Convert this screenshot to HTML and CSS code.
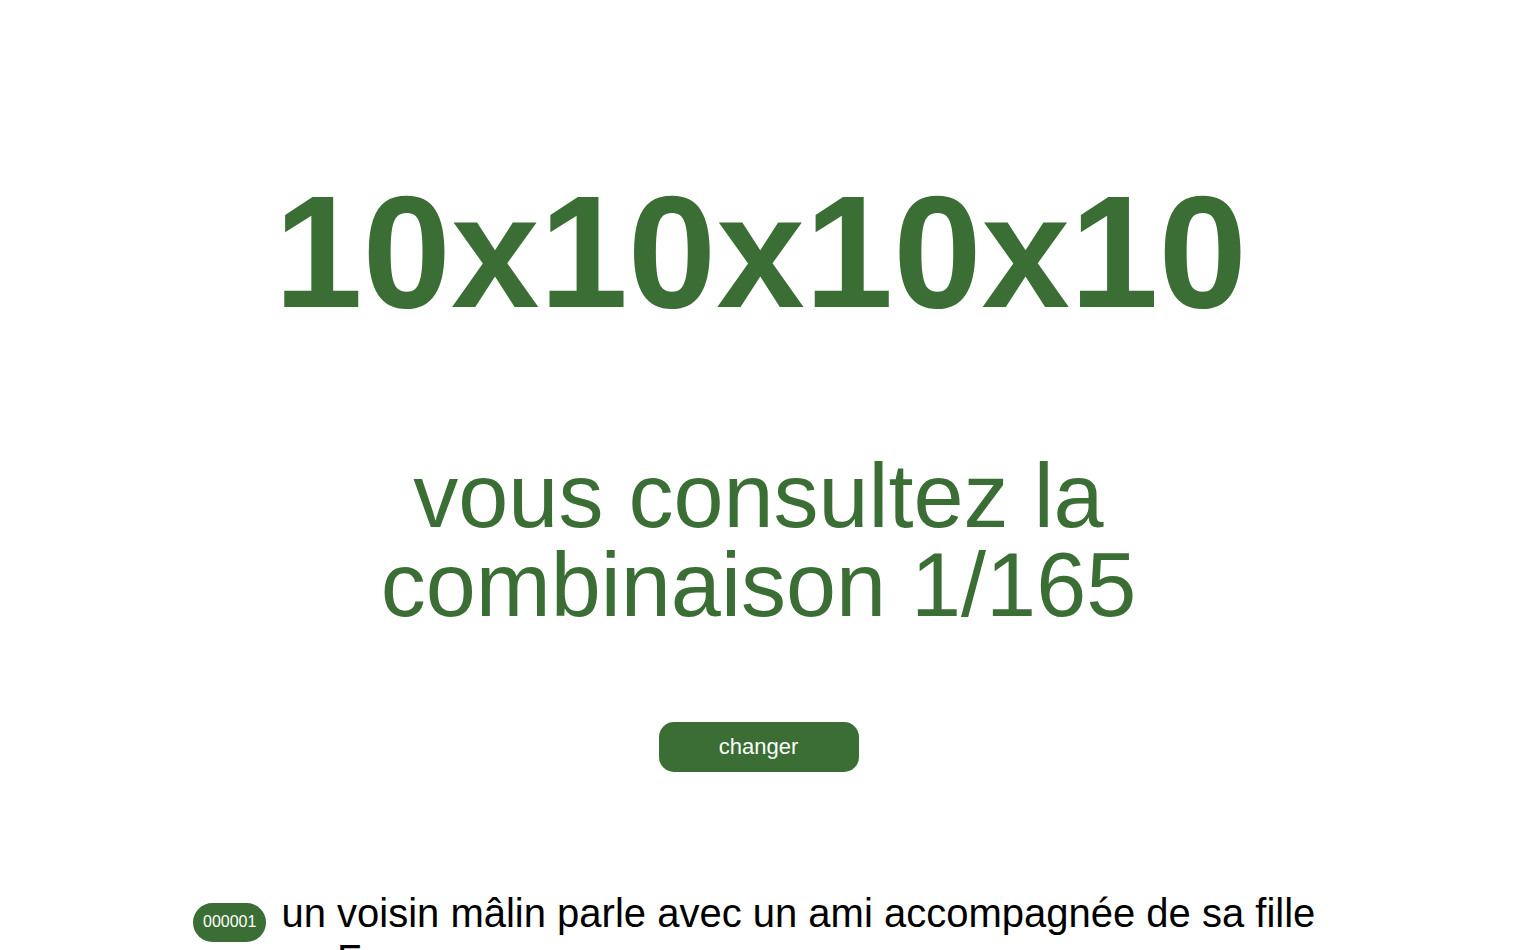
FILE: index.html
```html
<!DOCTYPE html>
<html lang="fr">
<head>
<meta charset="utf-8">
<title>10x10x10x10</title>
<link rel="stylesheet" href="styles.css">
</head>
<body>
<main class="page">
  <h1 class="title">10x10x10x10</h1>
  <p class="subtitle">vous consultez la combinaison 1/165</p>
  <button class="change-btn" type="button">changer</button>
  <ul class="list">
    <li class="item">
      <span class="badge">000001</span>
      <span class="item-text">un voisin mâlin parle avec un ami accompagnée de sa fille en France</span>
    </li>
  </ul>
</main>
</body>
</html>
```

FILE: styles.css
```css
html, body {
  margin: 0;
  padding: 0;
  background: #ffffff;
}

body {
  font-family: "Liberation Sans", Arial, sans-serif;
  color: #000000;
}

.page {
  display: flex;
  flex-direction: column;
  align-items: center;
  padding-top: 171px;
}

.title {
  margin: 0;
  padding-left: 4px;
  font-size: 159px;
  line-height: 162px;
  font-weight: 700;
  color: #3a6e34;
  text-align: center;
}

.subtitle {
  margin: 119px 0 0;
  max-width: 820px;
  font-size: 90px;
  line-height: 89px;
  font-weight: 400;
  color: #3a6e34;
  text-align: center;
}

.change-btn {
  margin-top: 92px;
  width: 200px;
  height: 50px;
  border: none;
  border-radius: 15px;
  background: #3a6e34;
  color: #ffffff;
  font-family: "Liberation Sans", Arial, sans-serif;
  font-size: 22px;
  padding: 0;
  cursor: pointer;
}

.list {
  list-style: none;
  margin: 118px 0 0;
  padding: 0;
  width: 1131px;
}

.item {
  display: flex;
  align-items: baseline;
  gap: 15px;
}

.badge {
  flex: none;
  background: #3a6e34;
  color: #ffffff;
  font-size: 16px;
  line-height: 18px;
  padding: 10px 10px 11px;
  border-radius: 20px;
}

.item-text {
  font-size: 40px;
  line-height: 46px;
}
```
